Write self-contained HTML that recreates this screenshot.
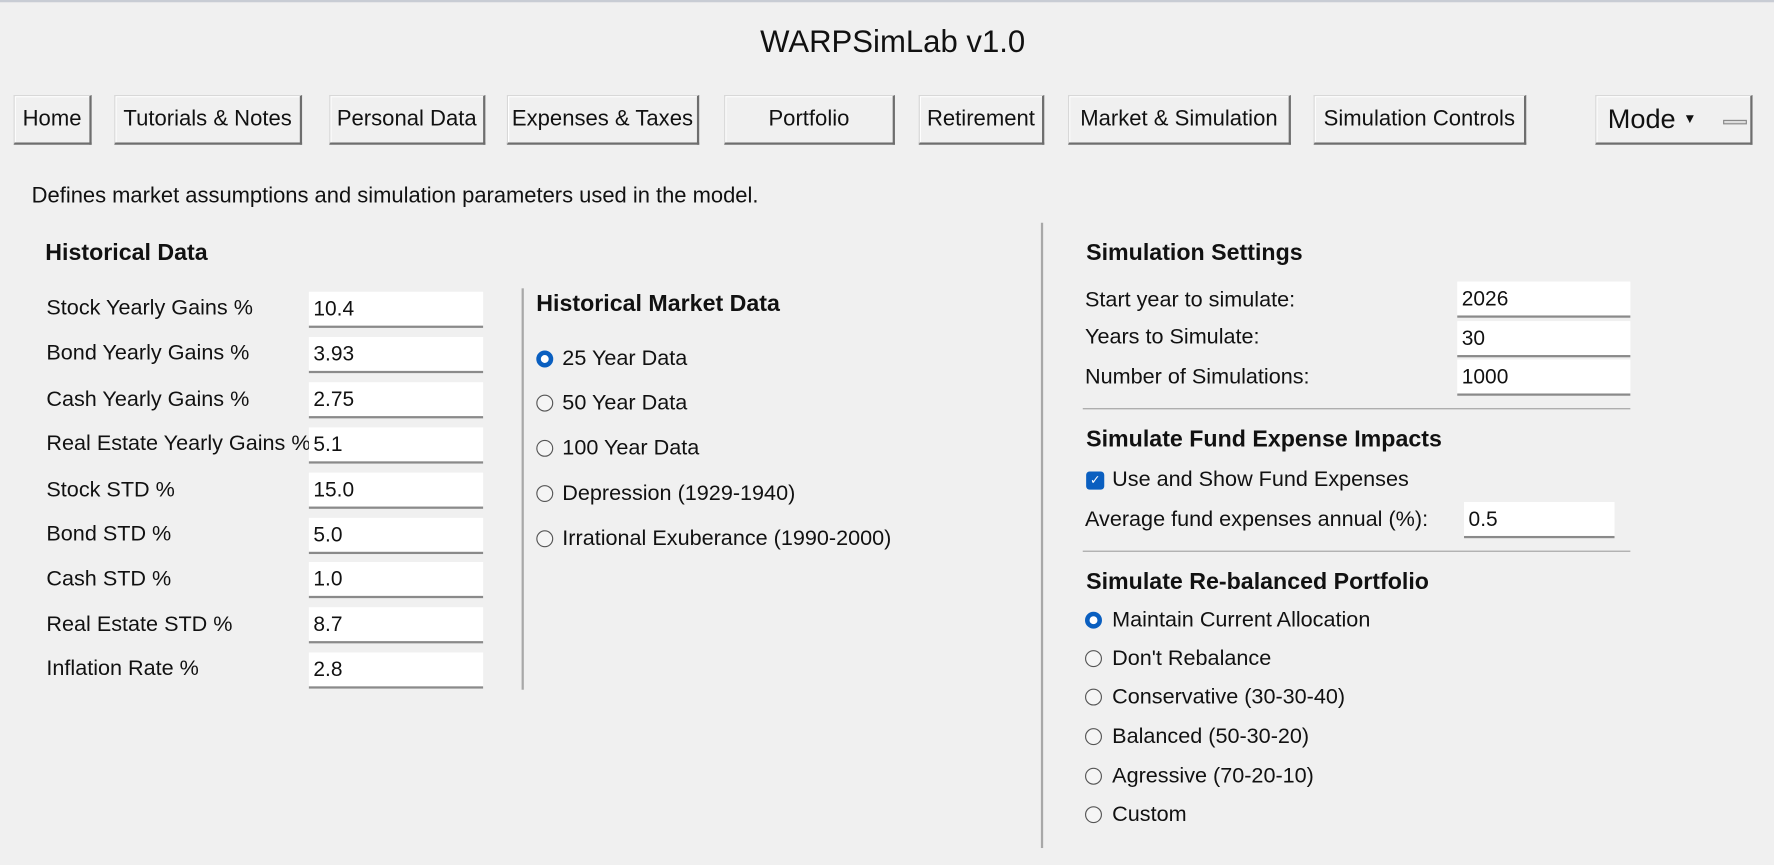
<!DOCTYPE html>
<html><head><meta charset="utf-8"><style>
*{margin:0;padding:0;box-sizing:border-box}
body{width:1774px;height:865px;background:#f0f0f0;overflow:hidden;font-family:"Liberation Sans",Arial,sans-serif;color:#111}
#w{position:absolute;left:0;top:0;width:1568px;height:765px;transform:scale(1.1314,1.1307);transform-origin:0 0}
.a{position:absolute;white-space:nowrap}
.t{font-size:19.1px;line-height:24px;height:24px}
.b{font-weight:bold;font-size:20.5px;line-height:24px;height:24px}
.btn{position:absolute;top:84px;height:44px;background:#f0f0f0;border:1px solid #d8d8d8;border-right:2px solid #6e6e6e;border-bottom:2px solid #6e6e6e;box-shadow:inset 1px 1px 0 #fff;font-size:19.5px;line-height:41px;text-align:center;color:#111}
.in{position:absolute;background:#fff;border-bottom:2px solid #8a8a8a;font-size:18.5px;line-height:30px;padding-left:4px;height:32px}
.r{position:absolute;width:15px;height:15px;border-radius:50%;border:1.3px solid #555;background:#f5f5f5}
.r.on{border:4.5px solid #0a5fc0;background:#fff}
.hl{position:absolute;height:1px;background:#a0a0a0}
.vl{position:absolute;width:2px;background:#a8a8a8}
</style></head><body><div id="w">
<div class="a" style="left:0;top:0;width:1568px;height:2px;background:#c8ccd4"></div>
<div class="a" style="left:0;width:1578px;top:20px;text-align:center;font-size:27.5px;line-height:34px">WARPSimLab v1.0</div>

<div class="btn" style="left:12px;width:69px">Home</div>
<div class="btn" style="left:101px;width:166px">Tutorials &amp; Notes</div>
<div class="btn" style="left:291px;width:138px">Personal Data</div>
<div class="btn" style="left:448px;width:170px">Expenses &amp; Taxes</div>
<div class="btn" style="left:640px;width:151px">Portfolio</div>
<div class="btn" style="left:812px;width:111px">Retirement</div>
<div class="btn" style="left:944px;width:197px">Market &amp; Simulation</div>
<div class="btn" style="left:1161px;width:188px">Simulation Controls</div>
<div class="btn" style="left:1410px;width:139px;text-align:left;padding-left:10px;font-size:24px;line-height:41px">Mode <span style="font-size:12px;position:relative;top:-4px">▼</span><span style="position:absolute;left:112px;top:21px;width:21px;height:4px;border:1px solid #888;background:#ddd"></span></div>

<div class="a" style="left:28px;top:161px;font-size:19.4px;line-height:24px">Defines market assumptions and simulation parameters used in the model.</div>

<div class="a b" style="left:40px;top:212px">Historical Data</div>
<div class="a t" style="left:41px;top:261px">Stock Yearly Gains %</div>
<div class="a t" style="left:41px;top:301px">Bond Yearly Gains %</div>
<div class="a t" style="left:41px;top:342px">Cash Yearly Gains %</div>
<div class="a t" style="left:41px;top:381px">Real Estate Yearly Gains %</div>
<div class="a t" style="left:41px;top:422px">Stock STD %</div>
<div class="a t" style="left:41px;top:461px">Bond STD %</div>
<div class="a t" style="left:41px;top:501px">Cash STD %</div>
<div class="a t" style="left:41px;top:541px">Real Estate STD %</div>
<div class="a t" style="left:41px;top:580px">Inflation Rate %</div>
<div class="in" style="left:273px;top:258px;width:154px">10.4</div>
<div class="in" style="left:273px;top:298px;width:154px">3.93</div>
<div class="in" style="left:273px;top:338px;width:154px">2.75</div>
<div class="in" style="left:273px;top:378px;width:154px">5.1</div>
<div class="in" style="left:273px;top:418px;width:154px">15.0</div>
<div class="in" style="left:273px;top:458px;width:154px">5.0</div>
<div class="in" style="left:273px;top:497px;width:154px">1.0</div>
<div class="in" style="left:273px;top:537px;width:154px">8.7</div>
<div class="in" style="left:273px;top:577px;width:154px">2.8</div>

<div class="vl" style="left:461px;top:255px;height:355px"></div>
<div class="a b" style="left:474px;top:257px">Historical Market Data</div>
<div class="r on" style="left:474px;top:310px"></div><div class="a t" style="left:497px;top:306px">25 Year Data</div>
<div class="r" style="left:474px;top:349px"></div><div class="a t" style="left:497px;top:345px">50 Year Data</div>
<div class="r" style="left:474px;top:389px"></div><div class="a t" style="left:497px;top:385px">100 Year Data</div>
<div class="r" style="left:474px;top:429px"></div><div class="a t" style="left:497px;top:425px">Depression (1929-1940)</div>
<div class="r" style="left:474px;top:469px"></div><div class="a t" style="left:497px;top:465px">Irrational Exuberance (1990-2000)</div>

<div class="vl" style="left:920px;top:197px;height:553px"></div>
<div class="a b" style="left:960px;top:212px">Simulation Settings</div>
<div class="a t" style="left:959px;top:254px">Start year to simulate:</div>
<div class="a t" style="left:959px;top:287px">Years to Simulate:</div>
<div class="a t" style="left:959px;top:322px">Number of Simulations:</div>
<div class="in" style="left:1288px;top:249px;width:153px">2026</div>
<div class="in" style="left:1288px;top:284px;width:153px">30</div>
<div class="in" style="left:1288px;top:318px;width:153px">1000</div>
<div class="hl" style="left:957px;top:361px;width:484px"></div>
<div class="a b" style="left:960px;top:377px">Simulate Fund Expense Impacts</div>
<div class="a" style="left:960px;top:417px;width:16px;height:16px;border-radius:3px;background:#0a5fc0;color:#fff;font-size:11px;line-height:16px;text-align:center">✓</div>
<div class="a t" style="left:983px;top:413px">Use and Show Fund Expenses</div>
<div class="a t" style="left:959px;top:448px">Average fund expenses annual (%):</div>
<div class="in" style="left:1294px;top:444px;width:133px">0.5</div>
<div class="hl" style="left:957px;top:487px;width:484px"></div>
<div class="a b" style="left:960px;top:503px">Simulate Re-balanced Portfolio</div>
<div class="r on" style="left:959px;top:541px"></div><div class="a t" style="left:983px;top:537px">Maintain Current Allocation</div>
<div class="r" style="left:959px;top:575px"></div><div class="a t" style="left:983px;top:571px">Don't Rebalance</div>
<div class="r" style="left:959px;top:609px"></div><div class="a t" style="left:983px;top:605px">Conservative (30-30-40)</div>
<div class="r" style="left:959px;top:644px"></div><div class="a t" style="left:983px;top:640px">Balanced (50-30-20)</div>
<div class="r" style="left:959px;top:679px"></div><div class="a t" style="left:983px;top:675px">Agressive (70-20-10)</div>
<div class="r" style="left:959px;top:713px"></div><div class="a t" style="left:983px;top:709px">Custom</div>
</div></body></html>
